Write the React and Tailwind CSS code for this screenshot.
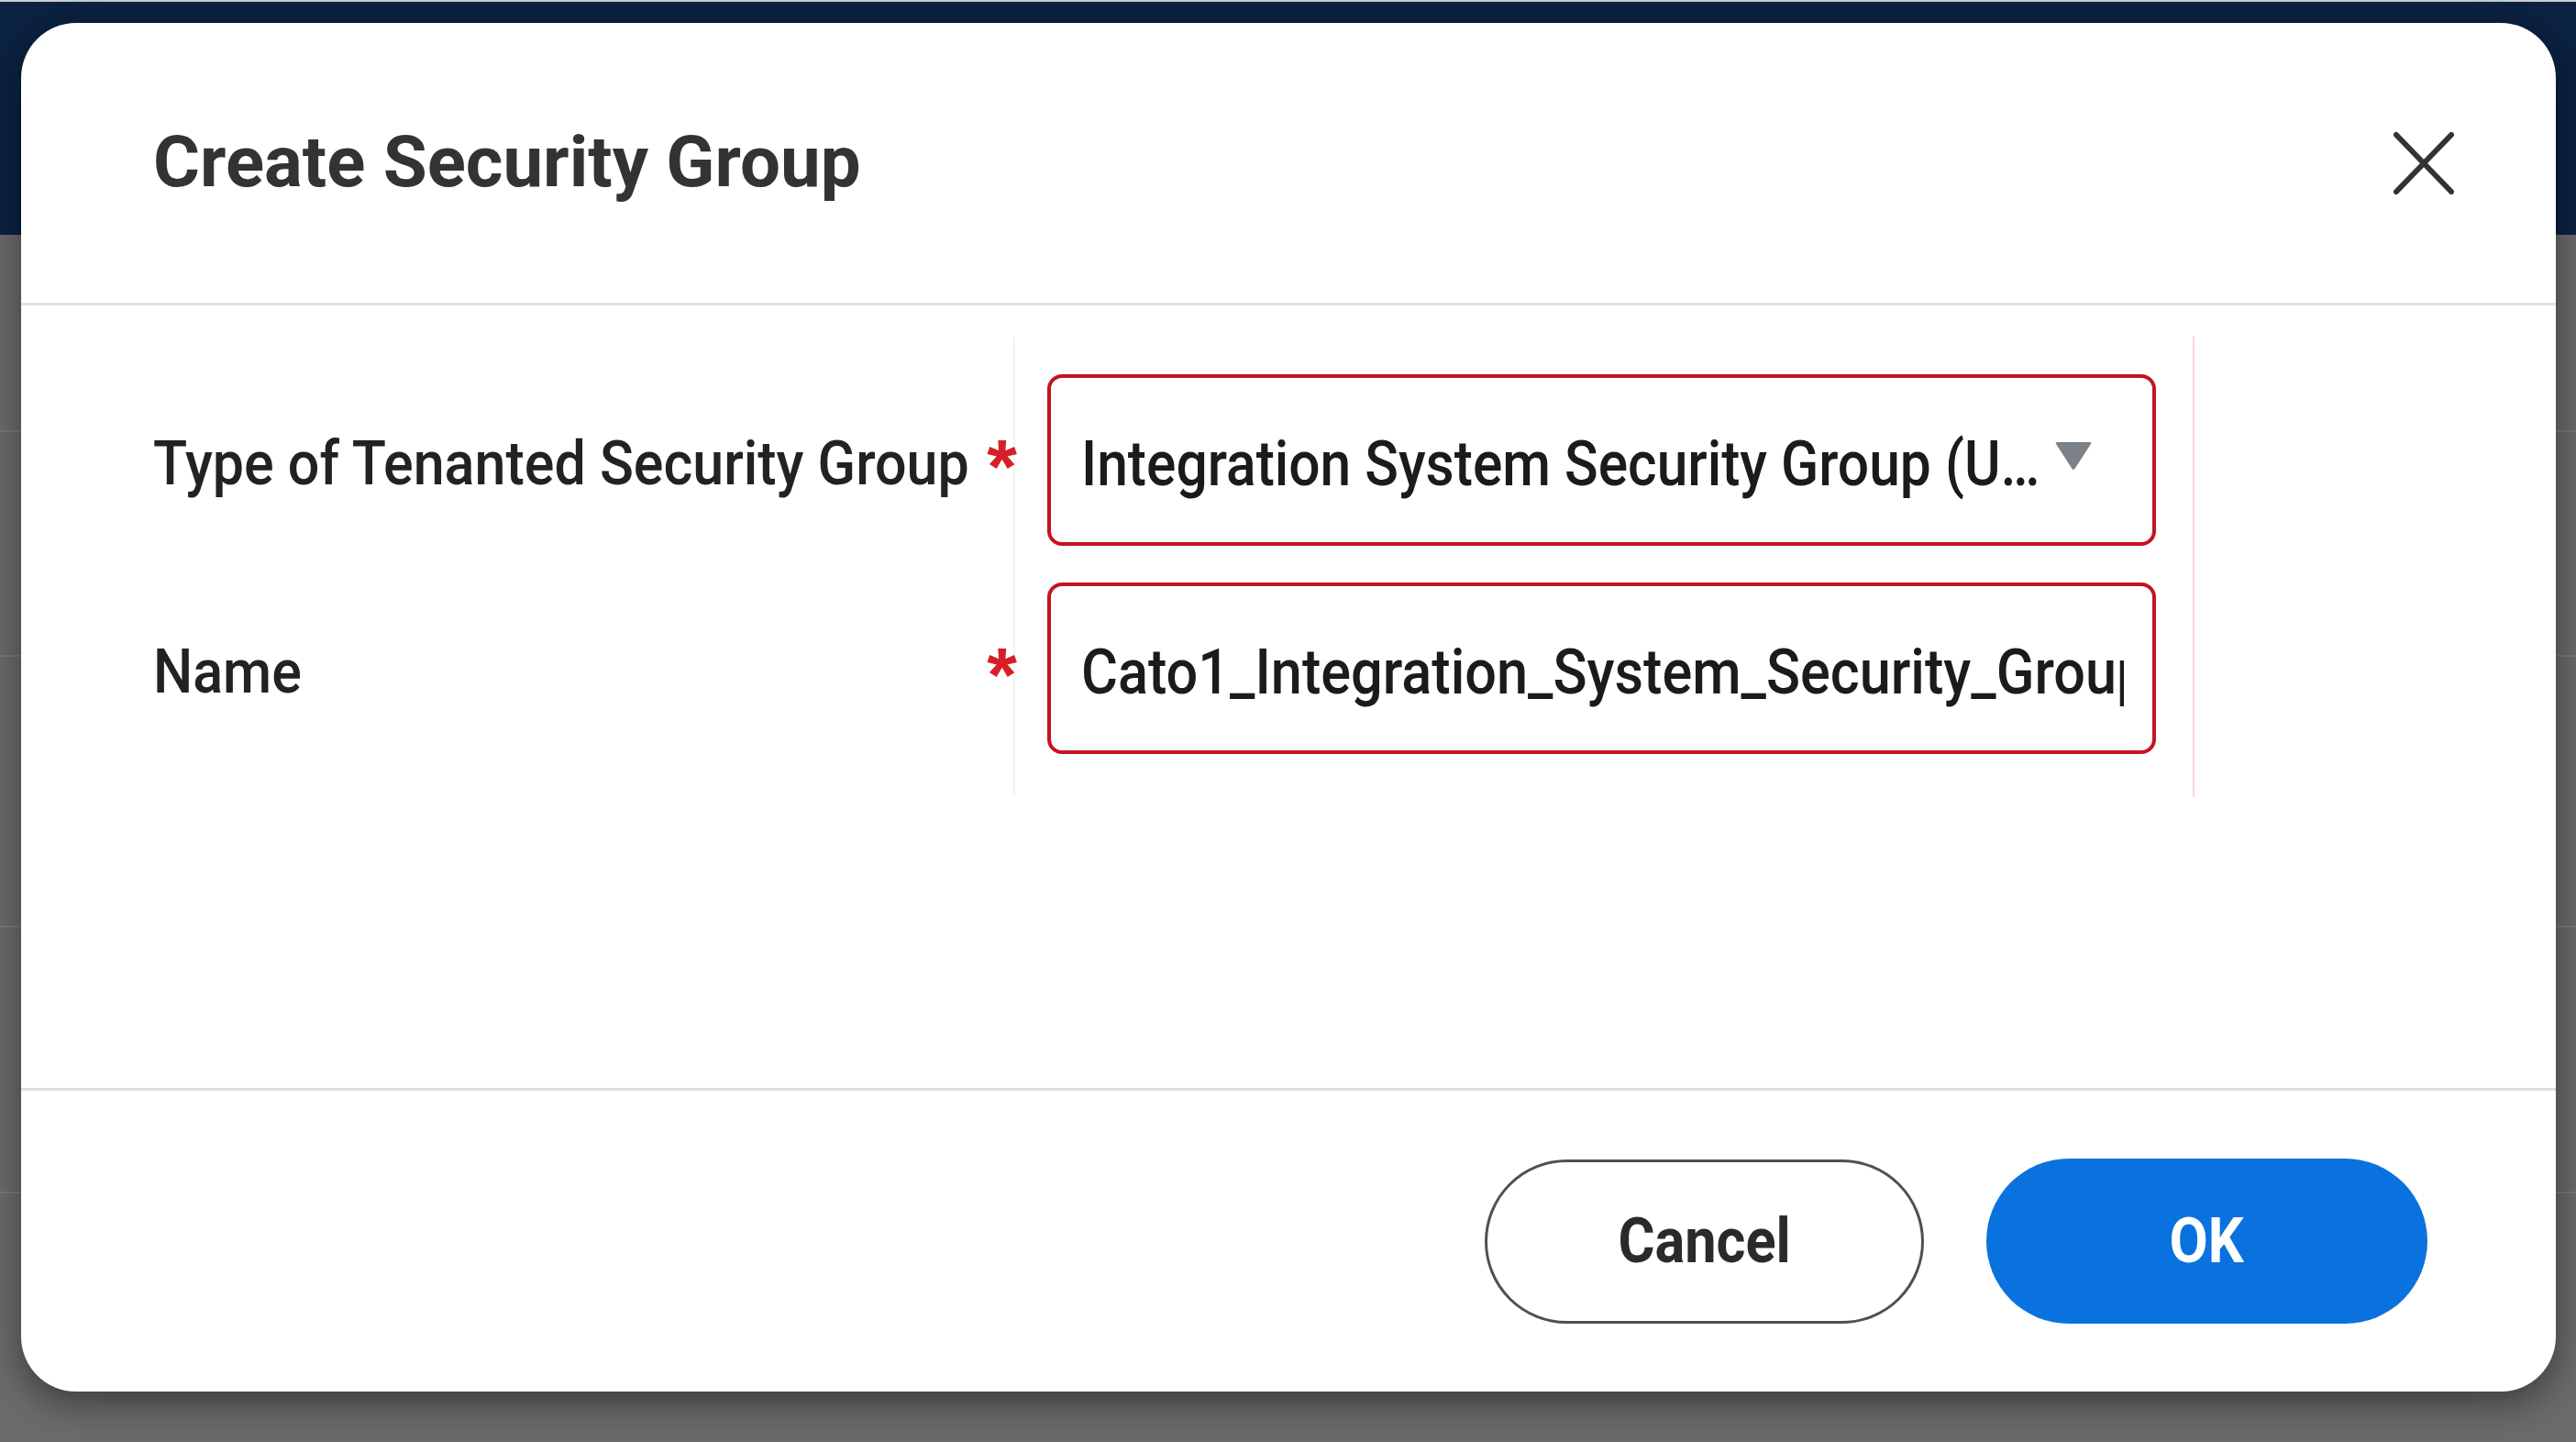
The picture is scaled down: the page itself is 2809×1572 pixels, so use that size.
import React from 'react';

const roboto = "font-['Roboto','Liberation_Sans',sans-serif]";

const CloseIcon = () => (
  <svg width="68" height="70" viewBox="0 0 68 70" fill="none">
    <path d="M4 4 L64 66 M64 4 L4 66" stroke="#333333" strokeWidth="6" strokeLinecap="round" />
  </svg>
);

const Caret = () => (
  <svg width="42" height="34" viewBox="0 0 42 34">
    <path d="M3 2 H39 Q41 2 40 4 L22.5 31 Q21 33 19.5 31 L2 4 Q1 2 3 2 Z" fill="#7b8189" />
  </svg>
);

// condensed text: Roboto squeezed to the narrow face the form uses
const Narrow = ({ className = '', children }) => (
  <span className={`${roboto} inline-block whitespace-nowrap leading-none font-medium origin-left translate-y-[4px] ${className}`}>
    {children}
  </span>
);

const FieldLabel = ({ children }) => (
  <div className="h-[187px] flex items-center">
    <div className="flex-1 min-w-0">
      <Narrow className="text-[67px] text-[#222222] scale-x-[0.91]">{children}</Narrow>
    </div>
    <span className="font-['Liberation_Sans',Arial,sans-serif] font-bold text-[84px] leading-none text-[#d71f26] -mr-[4px] translate-y-[7px]">*</span>
  </div>
);

// background page under the modal overlay
const PageBackdrop = () => (
  <div className="w-full h-full flex flex-col">
    <div className="h-[256px] bg-[#0b2241] border-t-[2px] border-[#c9ced6]" />
    <div className="flex-1 bg-[#6b6b6d] flex flex-col">
      <div className="h-[215px] border-b-[2px] border-[#7a7a7c]" />
      <div className="h-[245px] border-b-[2px] border-[#7a7a7c]" />
      <div className="h-[295px] border-b-[2px] border-[#7a7a7c]" />
      <div className="h-[290px] border-b-[2px] border-[#7a7a7c]" />
    </div>
  </div>
);

export default function App() {
  return (
    <div className="relative w-[2809px] h-[1572px] overflow-hidden bg-[#6b6b6d]">
      <PageBackdrop />

      <div className="absolute left-[23px] top-[25px] w-[2764px] h-[1492px] bg-white rounded-[60px] shadow-[0_12px_40px_rgba(0,0,0,0.45)] flex flex-col overflow-hidden">
        {/* header */}
        <div className="h-[308px] shrink-0 flex items-center justify-between pl-[144px] pr-[110px] border-b-[3px] border-[#dfe3e8]">
          <h1 className={`${roboto} font-bold text-[78px] text-[#333333] leading-none pb-[2px]`}>
            Create Security Group
          </h1>
          <button className="w-[68px] h-[70px] flex items-center justify-center">
            <CloseIcon />
          </button>
        </div>

        {/* form body */}
        <div className="flex-1 pt-[34px]">
          <div className="flex">
            <div className="w-[1082px] pl-[144px] pt-[41px] flex flex-col gap-[40px]">
              <FieldLabel>Type of Tenanted Security Group</FieldLabel>
              <FieldLabel>Name</FieldLabel>
            </div>
            <div className="w-[1288px] border-l-[2px] border-r-[2px] border-l-[#f4f4f5] border-r-[#f6d6d8] pt-[41px] pb-[47px] pl-[35px] pr-[40px] flex flex-col gap-[40px]">
              <div className="h-[187px] rounded-[16px] border-[4px] border-[#c3141f] flex items-center pl-[33px]">
                <div className="w-[1057px] overflow-hidden py-[16px]">
                  <Narrow className="text-[68px] text-[#1b1b1b] scale-x-[0.89]">Integration System Security Group (U…</Narrow>
                </div>
                <span className="ml-[4px] -mt-[10px]">
                  <Caret />
                </span>
              </div>
              <div className="h-[187px] rounded-[16px] border-[4px] border-[#c3141f] flex items-center pl-[33px]">
                <div className="w-[1137px] overflow-hidden py-[16px]">
                  <Narrow className="text-[68px] text-[#1b1b1b] scale-x-[0.9]">Cato1_Integration_System_Security_Group</Narrow>
                </div>
              </div>
            </div>
          </div>
        </div>

        {/* footer */}
        <div className="h-[331px] shrink-0 border-t-[3px] border-[#d9dee4] flex items-center justify-end gap-[68px] pr-[140px]">
          <button className="w-[479px] h-[179px] rounded-full border-[3px] border-[#505050] bg-white flex items-center justify-center">
            <span className={`${roboto} inline-block font-bold text-[68px] leading-none text-[#2a2a2a] scale-x-[0.9]`}>Cancel</span>
          </button>
          <button className="w-[481px] h-[180px] rounded-full bg-[#0a72de] flex items-center justify-center">
            <span className={`${roboto} inline-block font-bold text-[68px] leading-none text-white scale-x-[0.9]`}>OK</span>
          </button>
        </div>
      </div>
    </div>
  );
}
